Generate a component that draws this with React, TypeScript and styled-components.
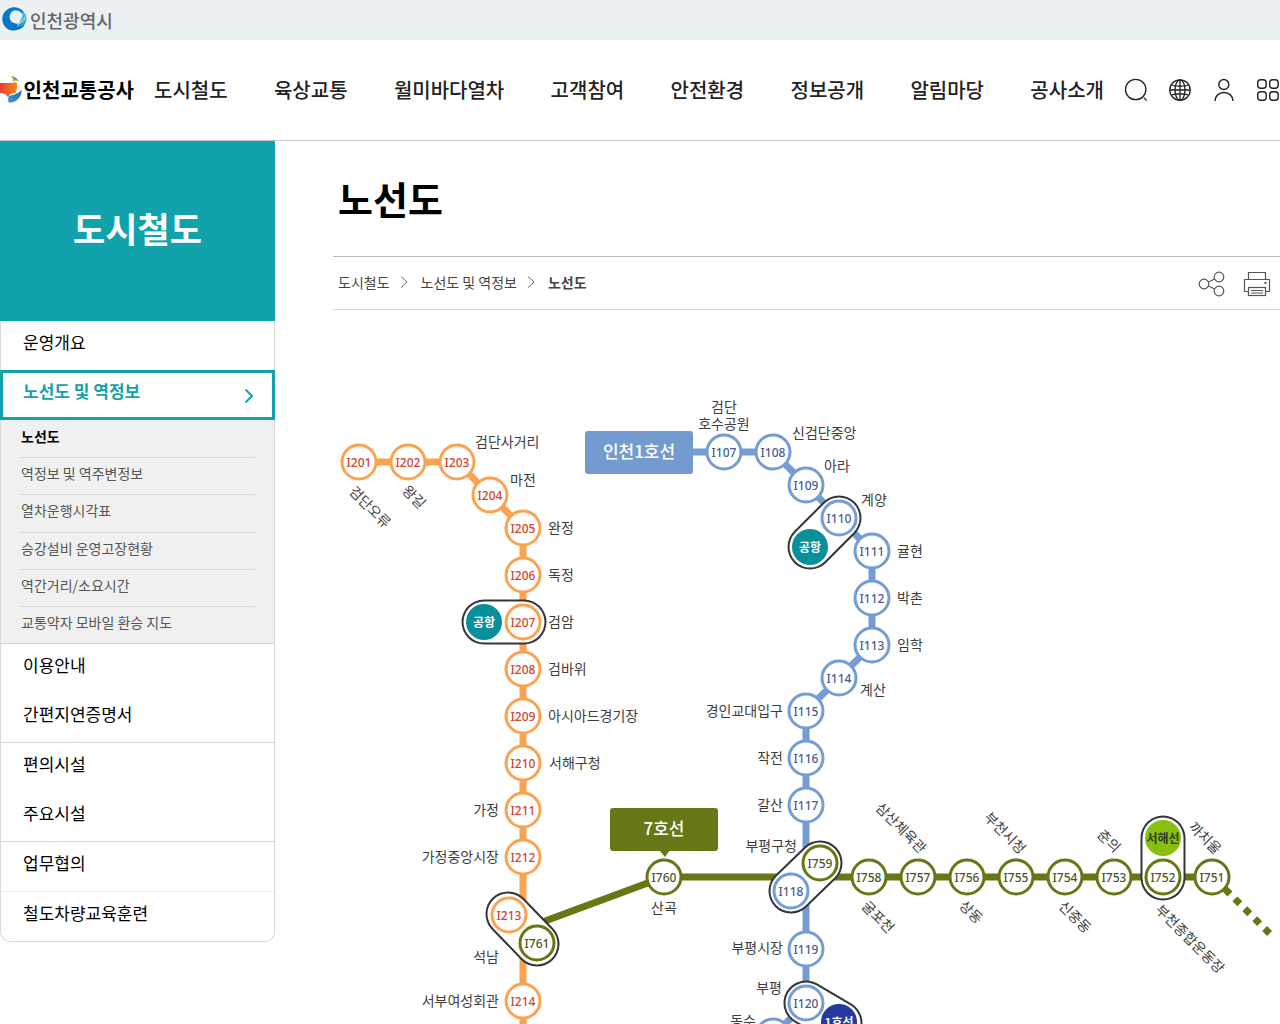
import React from "react";
import styled, { createGlobalStyle } from "styled-components";

const TEAL = "#12a2ac";
const ORANGE = "#faa350";
const BLUE = "#759cd3";
const GREEN = "#667815";

const GlobalStyle = createGlobalStyle`
  *, *::before, *::after { box-sizing: border-box; }
  html { overflow-x: hidden; }
  body {
    margin: 0;
    background: #fff;
    color: #222;
    font-family: "Noto Sans CJK KR", "Noto Sans", sans-serif;
    font-size: 14px;
  }
  h1, h2, ul, ol, p { margin: 0; padding: 0; }
  ul, ol { list-style: none; }
  a { color: inherit; text-decoration: none; }
  button { margin: 0; padding: 0; border: 0; background: none; color: inherit; cursor: pointer; }
  svg { display: block; }
`;

/* ---------- header ---------- */

const TopBar = styled.div`
  display: flex;
  align-items: center;
  height: 40px;
  padding-left: 2px;
  background: #ebf0f3;
`;

const CityLink = styled.a`
  display: flex;
  align-items: center;
  gap: 3px;
  padding-bottom: 1px;
  color: #62676b;
  font-size: 18px;
  font-weight: 500;
  line-height: 24px;
`;

const Header = styled.header`
  display: flex;
  align-items: center;
  gap: 20px;
  height: 101px;
  border-bottom: 1px solid #c9c9c9;
`;

const Logo = styled.a`
  display: flex;
  align-items: center;
  flex: none;
  width: 134px;
  color: #000;
  font-size: 20px;
  font-weight: 700;
  line-height: 28px;
  white-space: nowrap;
`;

const MainNav = styled.nav`
  flex: 1;
`;

const NavList = styled.ul`
  display: flex;
  justify-content: space-between;
`;

const NavLink = styled.a`
  color: #222;
  font-size: 20px;
  font-weight: 500;
  line-height: 28px;
  white-space: nowrap;
`;

const Tools = styled.div`
  display: flex;
  flex: none;
  gap: 20px;
`;

const IconButton = styled.button<{ $size: number }>`
  display: grid;
  place-items: center;
  width: ${(p) => p.$size}px;
  height: ${(p) => p.$size}px;
`;

/* ---------- side menu ---------- */

const Columns = styled.div`
  display: flex;
  align-items: flex-start;
  gap: 58px;
`;

const Side = styled.aside`
  flex: none;
  width: 275px;
`;

const SideTitle = styled.h2`
  display: grid;
  place-items: center;
  height: 180px;
  padding-bottom: 8px;
  background: ${TEAL};
  color: #fff;
  font-size: 35px;
  font-weight: 700;
`;

const SideMenu = styled.ul`
  border: 1px solid #d9d9d9;
  border-top: 0;
  border-radius: 0 0 10px 10px;
`;

const SideItem = styled.li<{ $line?: string }>`
  border-bottom: ${(p) => (p.$line ? `1px solid ${p.$line}` : "0")};
`;

const SideLink = styled.a`
  display: block;
  height: 49px;
  padding: 8px 22px;
  color: #000;
  font-size: 17px;
  line-height: 26px;
`;

const ActiveLink = styled.a`
  display: flex;
  justify-content: space-between;
  height: 50px;
  margin: 0 -1px;
  padding: 5px 18px 5px 20px;
  border: 3px solid ${TEAL};
  color: ${TEAL};
  font-size: 17px;
  font-weight: 700;
  line-height: 26px;

  svg { align-self: center; }
`;

const SubMenu = styled.ul`
  display: grid;
  grid-auto-rows: 1fr;
  height: 223px;
  padding: 0 19px;
  background: #f0f0f0;
`;

const SubItem = styled.li`
  display: flex;
  align-items: center;
  padding: 0 1px 6px;

  & + & { border-top: 1px solid #d8dadb; }
`;

const SubLink = styled.a<{ $current?: boolean }>`
  color: ${(p) => (p.$current ? "#000" : "#555")};
  font-weight: ${(p) => (p.$current ? 700 : 400)};
  font-size: 14px;
  line-height: 20px;
`;

/* ---------- content ---------- */

const Content = styled.main`
  flex: 1;
  min-width: 0;
`;

const PageTitle = styled.h1`
  height: 115px;
  padding: 30px 5px;
  color: #000;
  font-size: 38px;
  font-weight: 700;
  line-height: 54px;
`;

const PathBar = styled.div`
  display: flex;
  align-items: center;
  justify-content: space-between;
  height: 54px;
  padding: 0 9px 0 5px;
  border-top: 1px solid #c0c0c0;
  border-bottom: 1px solid #d6d6d6;
`;

const Crumbs = styled.ol`
  display: flex;
  align-items: center;
  padding-bottom: 2px;
`;

const Crumb = styled.li<{ $current?: boolean }>`
  display: flex;
  align-items: center;
  color: #444;
  font-size: 14px;
  font-weight: ${(p) => (p.$current ? 700 : 400)};
  line-height: 20px;

  svg { margin: 0 13px 0 10px; }
`;

const PathTools = styled.div`
  display: flex;
  gap: 17px;
  padding-top: 2px;
`;

const MapDrawing = styled.svg`
  width: 100%;
  height: auto;
`;

const StationName = styled.text`
  fill: #3d3d3d;
  font-size: 14px;
`;

const StationCode = styled.text<{ $color: string }>`
  fill: ${(p) => p.$color};
  font-family: "Noto Sans", sans-serif;
  font-size: 12px;
  font-weight: 500;
  text-anchor: middle;
`;

const BadgeText = styled.text<{ $color: string }>`
  fill: ${(p) => p.$color};
  font-size: 12px;
  font-weight: 700;
  text-anchor: middle;
`;

const LineTitle = styled.text`
  fill: #fff;
  font-size: 17px;
  font-weight: 500;
  text-anchor: middle;
`;

/* ---------- data ---------- */

const navItems = ["도시철도", "육상교통", "월미바다열차", "고객참여", "안전환경", "정보공개", "알림마당", "공사소개"];

const subItems = [
  "노선도",
  "역정보 및 역주변정보",
  "열차운행시각표",
  "승강설비 운영고장현황",
  "역간거리/소요시간",
  "교통약자 모바일 환승 지도",
];

const lowerItems: { name: string; line?: string }[] = [
  { name: "이용안내" },
  { name: "간편지연증명서", line: "#d4d4d4" },
  { name: "편의시설" },
  { name: "주요시설", line: "#d4d4d4" },
  { name: "업무협의", line: "#eeeeee" },
  { name: "철도차량교육훈련" },
];

type Station = [code: string, x: number, y: number];

const orangeStations: Station[] = [
  ["I201", 359, 462], ["I202", 408, 462], ["I203", 457, 462], ["I204", 490, 495],
  ["I205", 523, 528], ["I206", 523, 575], ["I207", 523, 622], ["I208", 523, 669],
  ["I209", 523, 716], ["I210", 523, 763], ["I211", 523, 810], ["I212", 523, 857],
  ["I213", 509, 915], ["I214", 523, 1001],
];

const blueStations: Station[] = [
  ["I107", 724, 452], ["I108", 773, 452], ["I109", 806, 485], ["I110", 839, 518],
  ["I111", 872, 551], ["I112", 872, 598], ["I113", 872, 645], ["I114", 839, 678],
  ["I115", 806, 711], ["I116", 806, 758], ["I117", 806, 805], ["I118", 791, 891],
  ["I119", 806, 949], ["I120", 806, 1003], ["I121", 773, 1036],
];

const greenStations: Station[] = [
  ["I761", 537, 943], ["I760", 664, 877], ["I759", 820, 863], ["I758", 869, 877],
  ["I757", 918, 877], ["I756", 967, 877], ["I755", 1016, 877], ["I754", 1065, 877],
  ["I753", 1114, 877], ["I752", 1163, 877], ["I751", 1212, 877],
];

type Anchor = "start" | "middle" | "end";

const names: [string, number, number, Anchor][] = [
  ["검단사거리", 475, 442, "start"], ["마전", 510, 480, "start"], ["완정", 548, 528, "start"],
  ["독정", 548, 575, "start"], ["검암", 548, 622, "start"], ["검바위", 548, 669, "start"],
  ["아시아드경기장", 548, 716, "start"], ["서해구청", 549, 763, "start"],
  ["가정", 499, 810, "end"], ["가정중앙시장", 499, 857, "end"], ["석남", 499, 957, "end"],
  ["서부여성회관", 499, 1001, "end"], ["산곡", 664, 908, "middle"],
  ["검단", 724, 407, "middle"], ["호수공원", 724, 424, "middle"],
  ["신검단중앙", 792, 433, "start"], ["아라", 824, 466, "start"], ["계양", 861, 500, "start"],
  ["귤현", 897, 551, "start"], ["박촌", 897, 598, "start"], ["임학", 897, 645, "start"],
  ["계산", 860, 690, "start"], ["경인교대입구", 783, 711, "end"], ["작전", 783, 758, "end"],
  ["갈산", 783, 805, "end"], ["부평구청", 797, 846, "end"], ["부평시장", 783, 948, "end"],
  ["부평", 782, 988, "end"], ["동수", 756, 1021, "end"],
];

const slantedNames: [string, number, number][] = [
  ["검단오류", 370, 507], ["왕길", 414, 497], ["삼산체육관", 901, 828], ["굴포천", 878, 917],
  ["상동", 971, 912], ["부천시청", 1005, 833], ["춘의", 1109, 841], ["까치울", 1205, 838],
  ["신중동", 1075, 917], ["부천종합운동장", 1190, 939],
];

/* ---------- icons ---------- */

const CityMark = () => (
  <svg width="25" height="25" viewBox="0 0 25 25" aria-hidden="true">
    <path
      d="M21 4C17 0 11-1 6 2 1 5-1 11 1 16c2 6 8 9 14 7 5-1 9-5 9-11-3 4-8 6-12 4-4-1-5-5-4-8 1-4 5-6 9-4 2 1 2 2 3 3z"
      fill="#0878c6"
    />
    <path d="M20 3c1 5 0 9-4 13 5-2 7-7 6-11zM22 6c1 5-2 9-6 11 5-1 8-5 8-9z" fill="#159fd2" />
    <path d="M24 10c0 5-4 8-9 9 5 0 9-3 9-6z" fill="#24c3a7" stroke="#24c3a7" strokeWidth="0.8" />
    <path d="M21 6c0 5-2 8-6 11M23 8c0 5-3 8-8 10" fill="none" stroke="#dff5f2" strokeWidth="0.7" />
  </svg>
);

const CompanyMark = () => (
  <svg width="24" height="30" viewBox="0 0 24 30" aria-hidden="true">
    <defs>
      <linearGradient id="warm" x1="0" x2="1">
        <stop offset="0" stopColor="#e4402a" />
        <stop offset="1" stopColor="#f58c1e" />
      </linearGradient>
      <linearGradient id="cool" x1="1" y1="0" x2="0" y2="1">
        <stop offset="0" stopColor="#2166b2" />
        <stop offset="1" stopColor="#3d9bd8" />
      </linearGradient>
    </defs>
    <path d="M11 1c4 0 7 2 8 5-2-1-4-1-6 0 1-2 0-4-2-5z" fill="#6cb33f" />
    <path d="M0 8c6 0 12 0 17-1 1 4 0 8-1 11-3 0-6 1-8 4-2-3-5-4-8-4z" fill="url(#warm)" />
    <path d="M22 15c0 7-5 13-13 13-1-2-1-5 0-7 5-1 9-2 13-6z" fill="url(#cool)" />
  </svg>
);

const SearchIcon = () => (
  <svg width="24" height="24" viewBox="0 0 24 24" fill="none" stroke="#222" strokeWidth="1.3" aria-hidden="true">
    <circle cx="11.7" cy="11.5" r="10.2" />
    <path d="M19.800 19.600l3 3" />
  </svg>
);

const GlobeIcon = () => (
  <svg width="24" height="24" viewBox="0 0 24 24" fill="none" stroke="#222" strokeWidth="1.3" aria-hidden="true">
    <circle cx="12" cy="12" r="10.2" />
    <ellipse cx="12" cy="12" rx="5" ry="10.2" />
    <path d="M12 2v20M3.500 7c5 1.500 12 1.500 17 0M3.500 17c5-1.500 12-1.500 17 0M2 12h20" />
  </svg>
);

const UserIcon = () => (
  <svg width="24" height="24" viewBox="0 0 24 24" fill="none" stroke="#222" strokeWidth="1.4" aria-hidden="true">
    <circle cx="11.800" cy="6.500" r="5" />
    <path d="M3 23c0-5 4-8.500 9-8.500s9 3.500 9 8.500" />
  </svg>
);

const AllMenuIcon = () => (
  <svg width="24" height="24" viewBox="0 0 24 24" fill="none" stroke="#222" strokeWidth="1.400" aria-hidden="true">
    <rect x="1.700" y="1.700" width="8.500" height="8.500" rx="3" />
    <rect x="13.700" y="1.700" width="8.500" height="8.500" rx="3" />
    <rect x="1.700" y="13.700" width="8.500" height="8.500" rx="3" />
    <rect x="13.700" y="13.700" width="8.500" height="8.500" rx="3" />
  </svg>
);

const ShareIcon = () => (
  <svg width="28" height="28" viewBox="0 0 28 28" fill="none" stroke="#555" strokeWidth="1.200" aria-hidden="true">
    <circle cx="6" cy="14" r="4.800" />
    <circle cx="21" cy="7" r="4.800" />
    <circle cx="21" cy="21" r="4.800" />
    <path d="M10.500 12l6-3M10.500 16l6 3" />
  </svg>
);

const PrintIcon = () => (
  <svg width="28" height="28" viewBox="0 0 28 28" fill="none" stroke="#555" strokeWidth="1.200" aria-hidden="true">
    <path d="M5.500 9.500v-7h17v7M5.500 21.500h-4v-12h25v12h-4" />
    <rect x="5.500" y="17.500" width="17" height="8" />
    <path d="M8 20.500h12M8 23h12" />
    <path d="M21.500 13h2" strokeWidth="2" />
  </svg>
);

const CrumbArrow = () => (
  <svg width="8" height="12" viewBox="0 0 8 12" fill="none" stroke="#666" strokeWidth="1" aria-hidden="true">
    <path d="M1 0.500l6 5.500-6 5.500" />
  </svg>
);

/* ---------- route map ---------- */

const Capsule = ({ d }: { d: string }) => (
  <g fill="none" strokeLinecap="round">
    <path d={d} stroke="#333538" strokeWidth="45" />
    <path d={d} stroke="#fff" strokeWidth="41" />
  </g>
);

const Stations = ({ list, ring, color }: { list: Station[]; ring: string; color: string }) => (
  <>
    {list.map(([code, x, y]) => (
      <g key={code}>
        <circle cx={x} cy={y} r="17" fill="#fff" stroke={ring} strokeWidth="3" />
        <StationCode $color={color} x={x} y={y + 5}>{code}</StationCode>
      </g>
    ))}
  </>
);

const Badge = ({ x, y, fill, color, text }: { x: number; y: number; fill: string; color: string; text: string }) => (
  <>
    <circle cx={x} cy={y} r="18" fill={fill} />
    <BadgeText $color={color} x={x} y={y + 5}>{text}</BadgeText>
  </>
);

const RouteMap = () => (
  <MapDrawing viewBox="333 310 947 714" role="img" aria-label="노선도">
    <g fill="none" strokeWidth="7">
      <path d="M359 462H457L523 528V1030" stroke={ORANGE} />
      <path d="M690 452H773L872 551V645L806 711V1003L773 1036" stroke={BLUE} />
      <path d="M537 924L664 877H1212" stroke={GREEN} />
      <path d="M1225 889L1271 935" stroke={GREEN} strokeDasharray="7 7" />
    </g>
    <Capsule d="M484 622H524" />
    <Capsule d="M839 518L810 547" />
    <Capsule d="M508 914L537 944" />
    <Capsule d="M820 863L791 891" />
    <Capsule d="M1163 838V878" />
    <Capsule d="M806 1003L840 1023" />
    <Stations list={orangeStations} ring={ORANGE} color="#d4432b" />
    <Stations list={blueStations} ring={BLUE} color="#4a5a94" />
    <Stations list={greenStations} ring={GREEN} color="#4b561f" />
    <Badge x={484} y={622} fill="#078f9b" color="#fff" text="공항" />
    <Badge x={810} y={547} fill="#078f9b" color="#fff" text="공항" />
    <Badge x={1163} y={838} fill="#88c010" color="#2c3a1c" text="서해선" />
    <Badge x={839} y={1022} fill="#25389b" color="#fff" text="1호선" />
    <rect x="585" y="431" width="108" height="43" rx="3" fill="#739bd0" />
    <LineTitle x="639" y="458">인천1호선</LineTitle>
    <path d="M659 850h11l-5 7z" fill={GREEN} />
    <rect x="610" y="808" width="108" height="43" rx="3" fill={GREEN} />
    <LineTitle x="664" y="835">7호선</LineTitle>
    {names.map(([name, x, y, anchor]) => (
      <StationName key={name} x={x} y={y + 5} textAnchor={anchor}>{name}</StationName>
    ))}
    {slantedNames.map(([name, x, y]) => (
      <StationName key={name} y="5" textAnchor="middle" transform={`translate(${x} ${y}) rotate(45)`}>
        {name}
      </StationName>
    ))}
  </MapDrawing>
);

/* ---------- page ---------- */

export default function App() {
  return (
    <>
      <GlobalStyle />
      <TopBar>
        <CityLink href="#city"><CityMark />인천광역시</CityLink>
      </TopBar>
      <Header>
        <Logo href="#home"><CompanyMark />인천교통공사</Logo>
        <MainNav>
          <NavList>
            {navItems.map((item) => (
              <li key={item}><NavLink href="#menu">{item}</NavLink></li>
            ))}
          </NavList>
        </MainNav>
        <Tools>
          <IconButton $size={24} type="button" aria-label="검색"><SearchIcon /></IconButton>
          <IconButton $size={24} type="button" aria-label="언어"><GlobeIcon /></IconButton>
          <IconButton $size={24} type="button" aria-label="로그인"><UserIcon /></IconButton>
          <IconButton $size={24} type="button" aria-label="전체메뉴"><AllMenuIcon /></IconButton>
        </Tools>
      </Header>
      <Columns>
        <Side>
          <SideTitle>도시철도</SideTitle>
          <SideMenu>
            <SideItem><SideLink href="#overview">운영개요</SideLink></SideItem>
            <SideItem $line="#d4d4d4">
              <ActiveLink href="#map">
                노선도 및 역정보
                <svg width="10" height="16" viewBox="0 0 10 16" fill="none" stroke={TEAL} strokeWidth="2" aria-hidden="true">
                  <path d="M1.500 2.500l6.500 6.500-6.500 6.500" />
                </svg>
              </ActiveLink>
              <SubMenu>
                {subItems.map((item, i) => (
                  <SubItem key={item}><SubLink href="#sub" $current={i === 0}>{item}</SubLink></SubItem>
                ))}
              </SubMenu>
            </SideItem>
            {lowerItems.map((item) => (
              <SideItem key={item.name} $line={item.line}>
                <SideLink href="#side">{item.name}</SideLink>
              </SideItem>
            ))}
          </SideMenu>
        </Side>
        <Content>
          <PageTitle>노선도</PageTitle>
          <PathBar>
            <Crumbs>
              <Crumb><a href="#rail">도시철도</a><CrumbArrow /></Crumb>
              <Crumb><a href="#info">노선도 및 역정보</a><CrumbArrow /></Crumb>
              <Crumb $current>노선도</Crumb>
            </Crumbs>
            <PathTools>
              <IconButton $size={28} type="button" aria-label="공유"><ShareIcon /></IconButton>
              <IconButton $size={28} type="button" aria-label="인쇄"><PrintIcon /></IconButton>
            </PathTools>
          </PathBar>
          <RouteMap />
        </Content>
      </Columns>
    </>
  );
}
